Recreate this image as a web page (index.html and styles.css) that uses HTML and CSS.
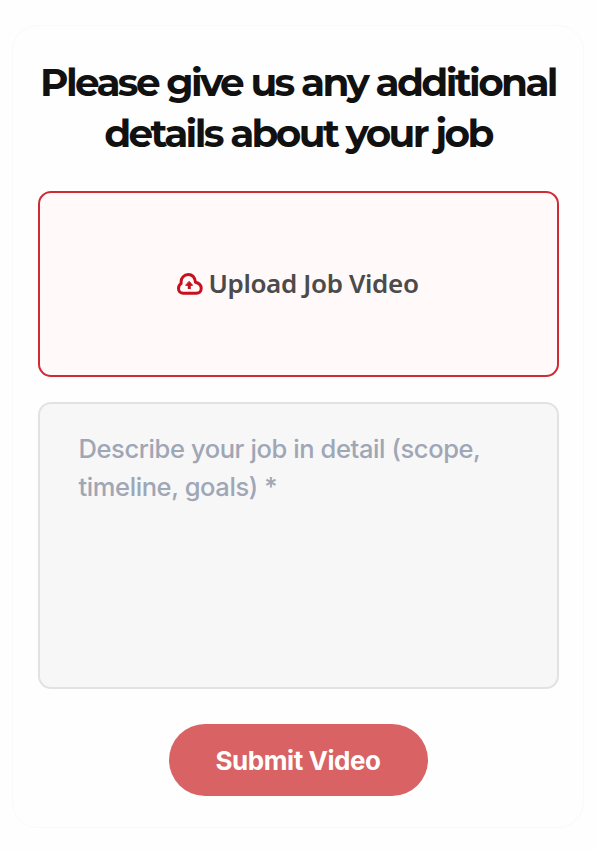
FILE: index.html
```html
<!DOCTYPE html>
<html lang="en">
<head>
    <meta charset="UTF-8">
    <meta name="viewport" content="width=device-width, initial-scale=1.0">
    <title>Job Details</title>
    <link rel="stylesheet" href="styles.css">
</head>
<body>
    <form class="job-card" onsubmit="event.preventDefault();">
        <h1>Please give us any additional<br>details about your job</h1>
        <label class="upload-box">
            <input type="file" accept="video/*" hidden>
            <svg class="upload-icon" viewBox="0 0 26 22" fill="none" stroke="#c8101c" stroke-width="3" stroke-linecap="round" stroke-linejoin="round">
                <path d="M6.300 20.200H19.500C22.300 20.200 24.200 18.200 24.200 15.500C24.200 12.800 22.300 10.200 18.500 9.300C17.800 4.500 15 1.600 11.300 1.600C7 1.600 4.100 4.700 4.100 8.900V10.500C2.300 11.700 1.500 13.500 1.500 15.500C1.500 18.400 3.500 20.200 6.300 20.200Z"/>
                <path d="M12.300 16v-4.500" stroke-linecap="butt"/>
                <path d="M12.300 8.600l3.300 3.700H9z" fill="#c8101c" stroke-width="1"/>
            </svg>
            <span class="upload-text">Upload Job Video</span>
        </label>
        <textarea class="job-details" placeholder="Describe your job in detail (scope, timeline, goals) *"></textarea>
        <button class="submit-btn" type="submit">Submit Video</button>
    </form>
</body>
</html>
```
FILE: styles.css
```css
* {
    box-sizing: border-box;
}
body {
    margin: 0;
    padding: 25px 13px 0 12px;
    background-color: #fefefe;
    font-family: Inter, sans-serif;
}
.job-card {
    display: flex;
    flex-direction: column;
    align-items: center;
    height: 803px;
    padding: 31px 25px 0;
    background-color: #fefefe;
    border: 1px solid #f9f9f9;
    border-radius: 26px;
}
h1 {
    margin: 0;
    text-align: center;
    white-space: nowrap;
    font-family: Montserrat, Inter, sans-serif;
    font-size: 39px;
    font-weight: 700;
    line-height: 51px;
    letter-spacing: -2.65px;
    color: #111111;
}
.upload-box {
    display: flex;
    align-items: center;
    justify-content: center;
    gap: 5px;
    width: 521px;
    height: 186px;
    margin-top: 32px;
    padding-bottom: 2px;
    background-color: #fff9f9;
    border: 2px solid #d02a35;
    border-radius: 13px;
    cursor: pointer;
}
.upload-icon {
    width: 26px;
    height: 22px;
    margin-top: 2px;
}
.upload-text {
    font-family: "Noto Sans", sans-serif;
    font-size: 26px;
    font-weight: 600;
    letter-spacing: -0.35px;
    color: #4b4b4b;
}
.job-details {
    width: 521px;
    height: 287px;
    margin-top: 25px;
    padding: 26px 39px;
    background-color: #f7f7f7;
    border: 2px solid #e2e2e2;
    border-radius: 13px;
    font-family: Inter, sans-serif;
    font-size: 25.5px;
    font-weight: 500;
    line-height: 38px;
    letter-spacing: -0.4px;
    resize: none;
}
.job-details::placeholder {
    color: #9fa6b5;
}
.submit-btn {
    width: 259px;
    height: 72px;
    margin-top: 35px;
    padding: 0;
    background-color: #d86264;
    border: none;
    border-radius: 36px;
    font-family: Inter, sans-serif;
    font-size: 26px;
    font-weight: 700;
    letter-spacing: -0.45px;
    color: #ffffff;
    cursor: pointer;
}
```
